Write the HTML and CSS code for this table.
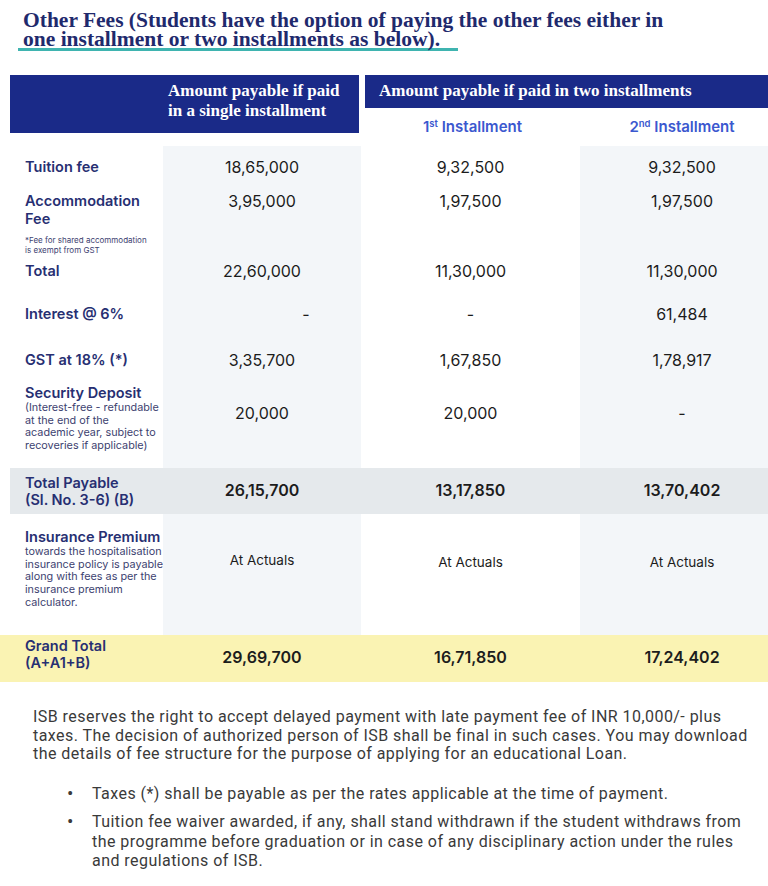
FILE: index.html
```html
<!DOCTYPE html>
<html lang="en">
<head>
<meta charset="utf-8">
<title>Other Fees</title>
<link rel="stylesheet" href="styles.css">
</head>
<body>
<div class="page">
  <h1 class="title">Other Fees (Students have the option of paying the other fees either in<br>one installment or two installments as below).</h1>
  <div class="title-bar"></div>

  <div class="thead">
    <div class="th-single">Amount payable if paid<br>in a single installment</div>
    <div class="th-two">
      <div class="th-two-bar">Amount payable if paid in two installments</div>
      <div class="th-sub">
        <div class="sub sub1">1<sup>st</sup> Installment</div>
        <div class="sub sub2">2<sup>nd</sup> Installment</div>
      </div>
    </div>
  </div>

  <div class="row r-tuition">
    <div class="lab">Tuition fee</div>
    <div class="val c1">18,65,000</div>
    <div class="val c2">9,32,500</div>
    <div class="val c3">9,32,500</div>
  </div>

  <div class="row r-accom">
    <div class="lab">Accommodation<br>Fee<div class="tiny">*Fee for shared accommodation<br>is exempt from GST</div></div>
    <div class="val c1">3,95,000</div>
    <div class="val c2">1,97,500</div>
    <div class="val c3">1,97,500</div>
  </div>

  <div class="row r-total">
    <div class="lab">Total</div>
    <div class="val c1">22,60,000</div>
    <div class="val c2">11,30,000</div>
    <div class="val c3">11,30,000</div>
  </div>

  <div class="row r-interest">
    <div class="lab">Interest @ 6%</div>
    <div class="val c1 dash-off">-</div>
    <div class="val c2">-</div>
    <div class="val c3">61,484</div>
  </div>

  <div class="row r-gst">
    <div class="lab">GST at 18% (*)</div>
    <div class="val c1">3,35,700</div>
    <div class="val c2">1,67,850</div>
    <div class="val c3">1,78,917</div>
  </div>

  <div class="row r-security">
    <div class="lab">Security Deposit<div class="small">(Interest-free - refundable<br>at the end of the<br>academic year, subject to<br>recoveries if applicable)</div></div>
    <div class="val c1">20,000</div>
    <div class="val c2">20,000</div>
    <div class="val c3">-</div>
  </div>

  <div class="row r-payable">
    <div class="lab lab-tight">Total Payable<br>(Sl. No. 3-6) (B)</div>
    <div class="val bold c1">26,15,700</div>
    <div class="val bold c2">13,17,850</div>
    <div class="val bold c3">13,70,402</div>
  </div>

  <div class="row r-insurance">
    <div class="lab">Insurance Premium<div class="small">towards the hospitalisation<br>insurance policy is payable<br>along with fees as per the<br>insurance premium<br>calculator.</div></div>
    <div class="val sm c1">At Actuals</div>
    <div class="val sm c2">At Actuals</div>
    <div class="val sm c3">At Actuals</div>
  </div>

  <div class="row r-grand">
    <div class="lab lab-tight">Grand Total<br>(A+A1+B)</div>
    <div class="val bold c1">29,69,700</div>
    <div class="val bold c2">16,71,850</div>
    <div class="val bold c3">17,24,402</div>
  </div>

  <p class="note">ISB reserves the right to accept delayed payment with late payment fee of INR 10,000/- plus<br>taxes. The decision of authorized person of ISB shall be final in such cases. You may download<br>the details of fee structure for the purpose of applying for an educational Loan.</p>

  <ul class="points">
    <li><span>Taxes (*) shall be payable as per the rates applicable at the time of payment.</span></li>
    <li><span>Tuition fee waiver awarded, if any, shall stand withdrawn if the student withdraws from<br>the programme before graduation or in case of any disciplinary action under the rules<br>and regulations of ISB.</span></li>
  </ul>
</div>
</body>
</html>
```

FILE: styles.css
```css
* { box-sizing: border-box; }

html, body {
  margin: 0;
  padding: 0;
  background: #ffffff;
}

body {
  font-family: Inter, "Noto Sans", sans-serif;
  color: #1c1c1c;
  overflow: hidden;
}

.page {
  width: 768px;
  padding-top: 11px;
}

.title {
  margin: 0 0 0 23px;
  font-family: "Liberation Serif", "Times New Roman", serif;
  font-weight: 700;
  font-size: 21.5px;
  line-height: 19px;
  color: #1f2a6d;
}

.title-bar {
  margin: -1px 0 0 18px;
  width: 440px;
  height: 3px;
  background: #3fb4b0;
}

/* Table header */
.thead {
  display: flex;
  gap: 6px;
  margin: 24px 0 0 10px;
}

.th-single {
  width: 349px;
  height: 58px;
  background: #1a2a88;
  color: #ffffff;
  font-family: "Liberation Serif", serif;
  font-weight: 700;
  font-size: 17px;
  line-height: 20px;
  padding: 6px 0 0 158px;
}

.th-two {
  flex: 1;
  display: flex;
  flex-direction: column;
}

.th-two-bar {
  height: 33px;
  background: #1a2a88;
  color: #ffffff;
  font-family: "Liberation Serif", serif;
  font-weight: 700;
  font-size: 17px;
  line-height: 20px;
  padding: 6px 0 0 14px;
}

.th-sub {
  display: flex;
  height: 38px;
  align-items: center;
}

.sub {
  text-align: center;
  color: #3b58cf;
  font-weight: 600;
  font-size: 15px;
  line-height: 18px;
}

.sub sup {
  font-size: 9.5px;
  line-height: 0;
  vertical-align: 5px;
}

.sub1 { width: 215px; }
.sub2 { flex: 1; padding-left: 16px; }

/* Table rows */
.row {
  display: grid;
  grid-template-columns: 153px 198px 219px 188px;
  margin-left: 10px;
}

.lab {
  padding-left: 15px;
  color: #272f72;
  font-weight: 600;
  font-size: 14.5px;
  line-height: 18px;
}

.val {
  text-align: center;
  font-size: 16px;
  line-height: 18px;
  color: #1c1c1c;
}

.val.bold { font-weight: 600; }
.val.sm { font-size: 13.5px; }

.c1, .c3 { background: #f3f6f9; }
.c3 { padding-left: 16px; }

.dash-off { padding-left: 88px; }

.tiny {
  margin-top: 7px;
  font-size: 8px;
  line-height: 10px;
  font-weight: 400;
  color: #3d4270;
  white-space: nowrap;
}

.small {
  font-size: 10.8px;
  line-height: 12.7px;
  font-weight: 400;
  color: #3d4270;
  white-space: nowrap;
}

.r-tuition { height: 37px; }
.r-tuition > div { padding-top: 12px; }

.r-accom { height: 75px; }
.r-accom > div { padding-top: 9px; }

.r-total { height: 32px; }
.r-total > div { padding-top: 4px; }

.r-interest { height: 45px; }
.r-interest > div { padding-top: 15px; }

.r-gst { height: 43px; }
.r-gst > div { padding-top: 16px; }

.r-security { height: 90px; }
.r-security > .lab { padding-top: 6px; }
.r-security > .val { padding-top: 26px; }

.r-payable {
  height: 46px;
  background: #e5e9ec;
}
.r-payable > div { background: transparent; padding-top: 13px; }
.r-payable > .lab { padding-top: 7px; }

.lab-tight { line-height: 16.5px; }

.r-insurance { height: 121px; }
.r-insurance > .lab { padding-top: 14px; }
.r-insurance > .c1 { padding-top: 37px; }
.r-insurance > .c2,
.r-insurance > .c3 { padding-top: 39px; }

.r-grand {
  height: 47px;
  margin-left: 0;
  grid-template-columns: 163px 198px 219px 188px;
  background: #faf3b3;
}
.r-grand > div { background: transparent; padding-top: 13px; }
.r-grand > .lab { padding-top: 3px; padding-left: 25px; }

/* Notes */
.note {
  margin: 26px 0 0 33px;
  font-family: Roboto, "Noto Sans", sans-serif;
  font-size: 16px;
  letter-spacing: 0.45px;
  line-height: 18.5px;
  color: #3a3a3a;
  white-space: nowrap;
}

.points {
  list-style: none;
  margin: 20px 0 0 0;
  padding: 0 0 0 67px;
  font-family: Roboto, "Noto Sans", sans-serif;
  font-size: 16px;
  letter-spacing: 0.45px;
  line-height: 19.5px;
  color: #3a3a3a;
  white-space: nowrap;
}

.points li {
  display: flex;
  margin-bottom: 9px;
}

.points li::before {
  content: "\2022";
  flex: 0 0 25px;
  font-size: 19px;
  line-height: 19.5px;
}
```
